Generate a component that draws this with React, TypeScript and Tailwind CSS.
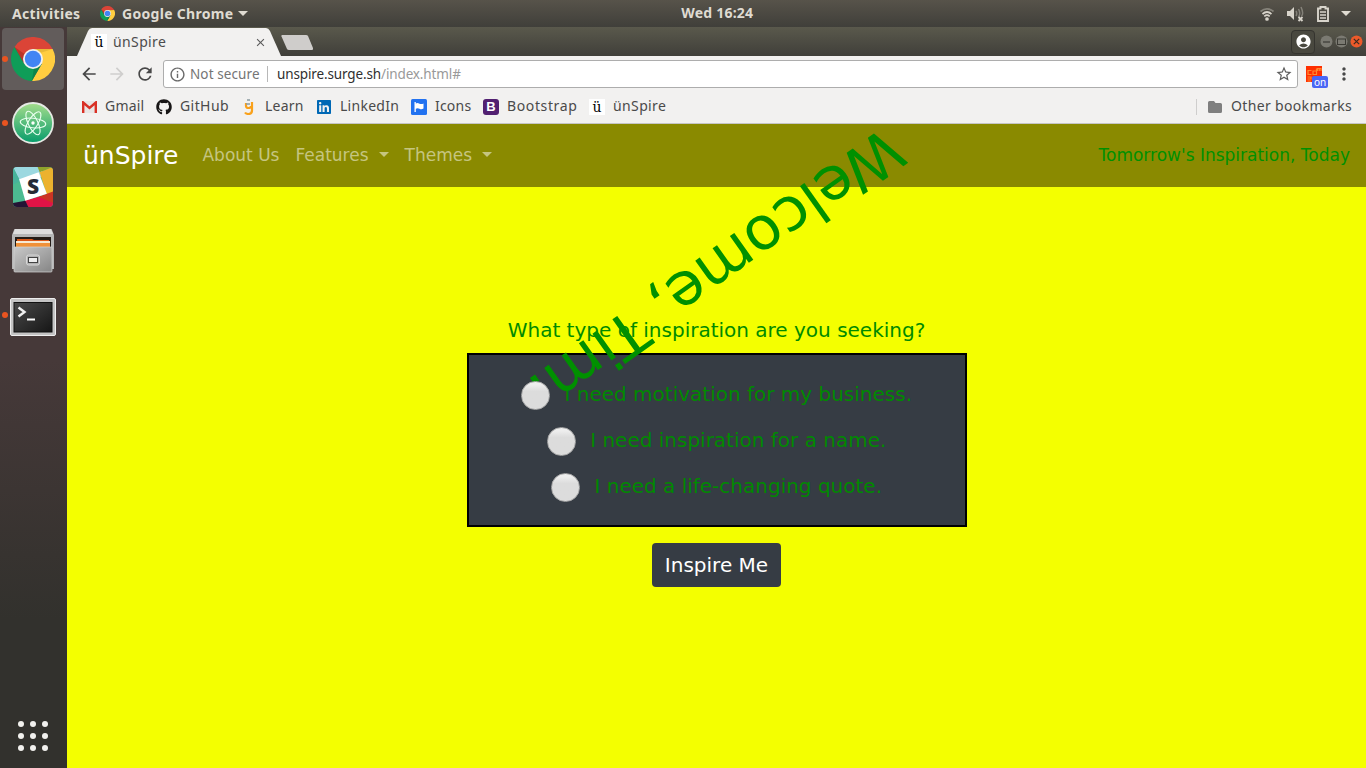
import React from "react";
import { FaGithub, FaLinkedin } from "react-icons/fa";
import { MdAccountCircle, MdArrowBack, MdArrowForward, MdRefresh, MdStarBorder, MdMoreVert, MdInfoOutline, MdClose } from "react-icons/md";

function ChromeLogo({ className }: { className: string }) {
  return (
    <svg viewBox="2 2 44 44" className={className}>
      <path d="M24 14H43.6A22 22 0 0 0 5.54 12.03L15.34 29Z" fill="#db4437" />
      <path d="M43.6 14A22 22 0 0 1 22.86 45.97L32.66 29L24 14Z" fill="#ffcd40" />
      <path d="M22.86 45.97A22 22 0 0 1 5.54 12.03L15.34 29H32.66Z" fill="#0f9d58" />
      <path d="M24 14H43.6L28 19Z" fill="#a97f1c" opacity=".25" />
      <path d="M5.54 12.03L15.34 29L17 20Z" fill="#7a1a10" opacity=".35" />
      <path d="M22.86 45.97L32.66 29L25 33Z" fill="#05502c" opacity=".3" />
      <circle cx="24" cy="24" r="10" fill="#f1f1f1" />
      <circle cx="24" cy="24" r="8.2" fill="#4285f4" />
    </svg>
  );
}

function AtomLogo() {
  return (
    <svg viewBox="0 0 42 42" className="size-[42px]">
      <defs>
        <linearGradient id="atom" x1="0" y1="0" x2="0" y2="1">
          <stop offset="0" stopColor="#a5dd8c" />
          <stop offset="1" stopColor="#069c6b" />
        </linearGradient>
      </defs>
      <circle cx="21" cy="21" r="20" fill="url(#atom)" stroke="#e6e9e4" strokeWidth="1.8" />
      <g fill="none" stroke="#eafff0" strokeWidth="1.1">
        <ellipse cx="21" cy="21" rx="12.8" ry="4.8" transform="rotate(6 21 21)" />
        <ellipse cx="21" cy="21" rx="12.8" ry="4.8" transform="rotate(64 21 21)" />
        <ellipse cx="21" cy="21" rx="12.8" ry="4.8" transform="rotate(122 21 21)" />
      </g>
      <circle cx="21" cy="21" r="1.7" fill="#fff" />
    </svg>
  );
}

function SlackLogo() {
  return (
    <div className="relative flex size-[40px] items-center justify-center overflow-hidden rounded-sm">
      <svg viewBox="0 0 39 39" className="absolute size-[40px]">
        <rect width="39" height="39" fill="#4cbb91" />
        <path d="M0 0H27L30 9L7 14Z" fill="#9bd8e0" />
        <path d="M0 0L7 14L0 17Z" fill="#47b39b" />
        <path d="M24 0H39L26 5Z" fill="#8fa32c" />
        <path d="M26 5L39 0V26L33 27Z" fill="#ecb22e" />
        <path d="M11 33L39 25V39H15Z" fill="#e01346" />
        <path d="M25 29L39 24V35Z" fill="#cb3524" />
        <path d="M0 35L12 33L15 39H0Z" fill="#241435" />
        <path d="M6 12L25 5L33 26L12 33Z" fill="#fff" />
      </svg>
      <span className="relative -top-px font-['Open_Sans',sans-serif] text-[21px] leading-none font-extrabold text-[#252a36]">S</span>
    </div>
  );
}

function FilesIcon() {
  return (
    <svg viewBox="0 0 42 44" className="h-[44px] w-[42px]">
      <defs>
        <linearGradient id="cab" x1="0" y1="0" x2="1" y2="1">
          <stop offset="0" stopColor="#c9c9c9" />
          <stop offset="1" stopColor="#858585" />
        </linearGradient>
      </defs>
      <path d="M2 1Q2 0 3 0H39Q40 0 40 1L42 6V40H0V6Z" fill="#b6b6b6" />
      <path d="M3 0H39L41 5H1Z" fill="#dddddd" />
      <rect x="3" y="8" width="36" height="11" fill="#241c17" />
      <path d="M5 10H20L22 11H37V20H5Z" fill="#d85618" />
      <path d="M4 12H38V14H4Z" fill="#f6e9d4" />
      <path d="M4 14H38V19H4Z" fill="#f09138" />
      <path d="M2 18H40V42Q40 43 39 43H3Q2 43 2 42Z" fill="url(#cab)" stroke="#d4d4d4" strokeWidth=".7" />
      <rect x="14.500" y="26" width="13" height="10" rx="2" fill="#b2b2b2" stroke="#d7d7d7" />
      <rect x="16.500" y="28.500" width="9" height="5" fill="#eee" stroke="#444" />
    </svg>
  );
}

function TerminalIcon() {
  return (
    <svg viewBox="0 0 46 38" className="mt-[4px] h-[38px] w-[46px]">
      <defs>
        <linearGradient id="term" x1="0" y1="0" x2="1" y2="1">
          <stop offset="0" stopColor="#4a4a4a" />
          <stop offset="1" stopColor="#161616" />
        </linearGradient>
      </defs>
      <rect x=".5" y=".5" width="45" height="37" rx="1.500" fill="#c4c4c4" stroke="#eeeeee" />
      <rect x="4" y="4.500" width="38" height="29.500" fill="url(#term)" stroke="#111" />
      <path d="M8.500 9.500L14.500 14L8.500 18.500" fill="none" stroke="#f1f1f1" strokeWidth="2.400" />
      <path d="M17 21.500H25" stroke="#fff" strokeWidth="2" />
    </svg>
  );
}

function DockItem({ children, running, active }: { children: React.ReactNode; running?: boolean; active?: boolean }) {
  return (
    <div className={active ? "relative flex h-[62px] w-[62px] items-center justify-center rounded-[4px] bg-[#625c5b]" : "relative flex h-[62px] w-[62px] items-center justify-center"}>
      {running && <span className="absolute top-[28px] left-0 size-[6px] rounded-full bg-[#e95420]" />}
      {children}
    </div>
  );
}

function Dock() {
  return (
    <aside className="flex w-[67px] shrink-0 flex-col items-center justify-between bg-linear-to-b from-[#463939] from-45% to-[#32312d] to-80% pt-px pr-px pb-[17px]">
      <div className="flex flex-col gap-[2px]">
        <DockItem running active><ChromeLogo className="size-[44px]" /></DockItem>
        <DockItem running><AtomLogo /></DockItem>
        <DockItem><SlackLogo /></DockItem>
        <DockItem><FilesIcon /></DockItem>
        <DockItem running><TerminalIcon /></DockItem>
      </div>
      <div className="grid grid-cols-3 gap-[6px]">
        {Array.from({ length: 9 }, (_, i) => (
          <span key={i} className="size-[6px] rounded-full bg-[#f2f1ee]" />
        ))}
      </div>
    </aside>
  );
}

function TopBar() {
  return (
    <header className="grid h-[27px] shrink-0 grid-cols-3 items-center bg-linear-to-b from-[#57534a] to-[#403f3a] font-['Noto_Sans',sans-serif] text-[14px] leading-none font-bold text-[#dfdbd2]">
      <div className="flex items-center pl-[12px]">
        <span className="w-[88px] tracking-[0.35px]">Activities</span>
        <ChromeLogo className="size-[15px]" />
        <span className="ml-[7px] w-[116px] whitespace-nowrap tracking-[0.3px]">Google Chrome</span>
        <svg viewBox="0 0 10 5" className="h-[5px] w-[10px]"><path d="M0 0H10L5 5Z" fill="#dfdbd2" /></svg>
      </div>
      <div className="pb-[2px] pl-[226px] tracking-[0.2px] whitespace-nowrap">Wed 16:24</div>
      <div className="flex items-center justify-end pr-[15px]">
        <svg viewBox="0 0 16 14" className="mr-[12px] h-[14px] w-[16px]" fill="none" stroke="#d8d4cb" strokeWidth="1.700">
          <path d="M1.500 4.500Q8 -.8 14.500 4.500" opacity=".4" />
          <path d="M3.500 7Q8 3 12.500 7" />
          <path d="M5.300 9.300Q8 7 10.700 9.300" />
          <circle cx="8" cy="12" r="1" fill="#d8d4cb" />
        </svg>
        <svg viewBox="0 0 17 16" className="mr-[13px] h-[16px] w-[17px]" fill="none" stroke="#d8d4cb">
          <path d="M0 5H3L7 1V14L3 10H0Z" fill="#d8d4cb" stroke="none" />
          <path d="M9 5Q10.500 7.500 9 10M11.500 3Q14 7.500 11.500 11M14 1Q17 7.500 14.500 10" opacity=".4" strokeWidth="1.500" />
          <path d="M11.500 11L15.500 15M15.500 11L11.500 15" strokeWidth="1.800" />
        </svg>
        <svg viewBox="0 0 12 16" className="mr-[12px] h-[16px] w-[12px]" fill="none" stroke="#d8d4cb">
          <path d="M1 2.500H3.500V1H8.500V2.500H11V15H1Z" strokeWidth="1.900" />
          <path d="M3 6H9M3 9H9M3 12H9" strokeWidth="1.700" />
        </svg>
        <svg viewBox="0 0 10 5" className="h-[5px] w-[10px]"><path d="M0 0H10L5 5Z" fill="#dfdbd2" /></svg>
      </div>
    </header>
  );
}

function Favicon() {
  return <span className="flex size-[16px] items-center justify-center bg-white font-['DejaVu_Serif',serif] text-[14px] leading-none font-normal text-black">ü</span>;
}

function TabStrip() {
  return (
    <div className="flex h-[29px] items-end bg-linear-to-b from-[#5a594c] to-[#403f3a] pl-[10px]">
      <div className="relative flex h-[28px] w-[204px] items-center">
        <svg viewBox="0 0 204 28" className="absolute h-[28px] w-[204px]"><path d="M0 28L11 3Q12.500 0 15 0H189Q191.500 0 193 3L204 28Z" fill="#f2f1f0" /></svg>
        <div className="relative flex w-full items-center pl-[14px]">
          <Favicon />
          <span className="ml-[6px] w-[141px] text-[14px] leading-none tracking-[0.38px] text-[#4c4c4c]">ünSpire</span>
          <MdClose className="size-[13px] text-[#5a5a5a]" />
        </div>
      </div>
      <svg viewBox="0 0 33 15" className="mb-[6px] h-[15px] w-[33px]"><path d="M1 0H25Q26.500 0 27 1L32 13Q32.500 15 31 15H8Q6.500 15 6 14L.5 1.500Q0 0 1 0Z" fill="#cfcdcb" /></svg>
      <div className="ml-auto flex h-[29px] items-center pr-[3px]">
        <div className="mr-[5px] flex h-[24px] w-[24px] items-center justify-center rounded-[4px] border border-[#35342f] bg-[#49483f]">
          <MdAccountCircle className="size-[17px] text-white" />
        </div>
        <svg viewBox="0 0 43 13" className="h-[13px] w-[43px]" fill="none">
          <circle cx="6.500" cy="6.500" r="6" fill="#7b7a72" /><path d="M3 7H10" stroke="#3b3a34" strokeWidth="1.200" />
          <circle cx="21.500" cy="6.500" r="6" fill="#7b7a72" /><rect x="17.500" y="4" width="8" height="5.500" stroke="#3b3a34" />
          <circle cx="36.500" cy="6.500" r="6" fill="#ec5a2a" /><path d="M33.800 3.800L39.200 9.200M39.200 3.800L33.800 9.200" stroke="#3b2a20" strokeWidth="1.200" />
        </svg>
      </div>
    </div>
  );
}

function AddressBar() {
  return (
    <div className="flex h-[36px] items-center pl-[12px]">
      <MdArrowBack className="size-[20px] text-[#484848]" />
      <MdArrowForward className="ml-[8px] size-[20px] text-[#cfcecd]" />
      <MdRefresh className="ml-[8px] size-[20px] text-[#484848]" />
      <div className="ml-[8px] flex h-[28px] w-[1135px] items-center rounded-[3px] border border-[#adadad] bg-white pl-[5px] text-[13.500px] leading-none">
        <MdInfoOutline className="size-[17px] text-[#6a6a6a]" />
        <span className="mt-px ml-[4px] w-[77px] tracking-[0.1px] whitespace-nowrap text-[#757575]">Not secure</span>
        <span className="mr-[9px] h-[16px] w-px bg-[#b8b8b8]" />
        <span className="mt-px tracking-[-0.13px] text-[#2f2f2f]">unspire.surge.sh</span><span className="mt-px tracking-[-0.13px] text-[#999]">/index.html#</span>
        <MdStarBorder className="mr-[4px] ml-auto size-[18px] text-[#5d5d5d]" />
      </div>
      <div className="relative ml-[8px] size-[16px] bg-[#ff2f00] leading-none">
        <svg viewBox="0 0 16 16" className="size-[16px]" fill="none" stroke="#ff8a30" strokeWidth="1.200">
          <path d="M5.500 4.500H2V8.500H5.500M10.500 2.500V8.500H7V5H10.500M11.500 5V2.500H15V5M13.300 2.500V5M1.500 11H5V13H1.500M1.500 15H5" />
        </svg>
        <span className="absolute top-[10px] left-[6px] flex h-[12px] w-[16px] items-center justify-center rounded-[2px] bg-[#4a66f5] text-[10px] leading-none text-white">on</span>
      </div>
      <MdMoreVert className="ml-[12px] size-[20px] text-[#484848]" />
    </div>
  );
}

function Bookmark({ icon, label, width, spacing = "tracking-[0.2px]" }: { icon: React.ReactNode; label: string; width: string; spacing?: string }) {
  return (
    <div className={"flex items-center gap-[8px] whitespace-nowrap " + width}>
      <span className="flex w-[16px] shrink-0 justify-center">{icon}</span>
      <span className={"pb-[2px] " + spacing}>{label}</span>
    </div>
  );
}

function BookmarksBar() {
  return (
    <div className="flex h-[32px] items-center border-b border-[#c6c5c4] pb-[2px] pl-[14px] text-[14px] leading-none text-[#4a4a4a]">
      <Bookmark width="w-[75px]" label="Gmail" icon={
        <svg viewBox="0 0 15 12" className="h-[12px] w-[15px]"><path d="M0 0H15V12H0Z" fill="#e8e6e5" /><path d="M1.200 12V1.500L7.500 7L13.800 1.500V12" fill="none" stroke="#d93025" strokeWidth="2.400" /></svg>} />
      <Bookmark width="w-[85px]" label="GitHub" spacing="tracking-[0.42px]" icon={<FaGithub className="size-[16px] text-[#171515]" />} />
      <Bookmark width="w-[75px]" label="Learn" icon={
        <svg viewBox="0 0 12 16" className="h-[16px] w-[12px]" fill="none"><path d="M9 3V11.500Q9 15 5.500 15Q3 15 2 13.500" stroke="#f9a11b" strokeWidth="2.200" /><path d="M3 4V7Q3 9 5.500 9Q8 9 8 7" stroke="#f9a11b" strokeWidth="2.200" /><path d="M4 1H7M3 5H7" stroke="#8a9aa0" strokeWidth="1.500" /></svg>} />
      <Bookmark width="w-[95px]" label="LinkedIn" spacing="tracking-[0.28px]" icon={<FaLinkedin className="size-[16px] text-[#0068b5]" />} />
      <Bookmark width="w-[72px]" label="Icons" icon={
        <svg viewBox="0 0 16 16" className="size-[16px]"><rect width="16" height="16" rx="1.500" fill="#2272f0" /><path d="M3.500 3H4.800V4.500Q6.500 3.500 8.500 4.700Q10.500 5.600 12.500 4.500V9.500Q10.500 10.800 8.500 9.700Q6.500 8.800 4.800 9.800V13H3.500Z" fill="#fff" /></svg>} />
      <Bookmark width="w-[106px]" label="Bootstrap" spacing="tracking-[0.62px]" icon={<span className="flex size-[16px] items-center justify-center rounded-[3px] bg-[#522071] font-['Liberation_Sans',sans-serif] text-[13px] leading-none font-bold text-white">B</span>} />
      <Bookmark width="w-[90px]" label="ünSpire" spacing="tracking-[0.38px]" icon={<Favicon />} />
      <div className="ml-auto flex items-center pr-[14px]">
        <span className="mr-[11px] h-[16px] w-px bg-[#cfcecd]" />
        <svg viewBox="0 0 14 12" className="mr-[9px] h-[12px] w-[14px]"><path d="M1.500 0H6L7.500 2H12.500Q14 2 14 3.500V10.500Q14 12 12.500 12H1.500Q0 12 0 10.500V1.500Q0 0 1.500 0Z" fill="#7f7f7f" /></svg>
        <span className="pb-[2px] tracking-[0.34px] whitespace-nowrap">Other bookmarks</span>
      </div>
    </div>
  );
}

function Caret() {
  return <span className="ml-[10px] inline-block border-x-[5px] border-t-[5px] border-x-transparent border-t-[#c5c580] align-[4px]" />;
}

function SiteNav() {
  return (
    <nav className="flex h-[63px] items-center bg-[#8a8a00] px-[16px] text-[17px] text-[#c5c580]">
      <a className="mr-[24px] text-[25px] text-white">ünSpire</a>
      <a className="mr-[16px]">About Us</a>
      <a className="mr-[16px]">Features<Caret /></a>
      <a>Themes<Caret /></a>
      <span className="ml-auto text-[#009000]">Tomorrow's Inspiration, Today</span>
    </nav>
  );
}

function Option({ label }: { label: string }) {
  return (
    <label className="flex h-[46px] items-center justify-center pb-[2px]">
      <span className="relative z-20 mt-[3px] mr-[14.500px] size-[29px] rounded-full border border-[#a9a9a9] bg-linear-to-b from-[#eeeeee] from-10% to-[#dcdcdc] to-35%" />
      {label}
    </label>
  );
}

function Page() {
  return (
    <main className="flex flex-1 flex-col bg-[#f4ff00] font-['DejaVu_Sans',sans-serif] text-[20px] text-[#008a00]">
      <SiteNav />
      <div className="flex flex-col items-center">
        <h1 className="relative z-10 mt-[48px] h-[72px] rotate-[144.600deg] text-[60px] leading-[72px] whitespace-nowrap text-[#009000]">Welcome, Tim.</h1>
        <p className="mt-[8px] leading-[30px]">What type of inspiration are you seeking?</p>
        <div className="mt-[8px] h-[174px] w-[500px] border-2 border-black bg-[#363c44] pt-[17px]">
          <Option label="I need motivation for my business." />
          <Option label="I need inspiration for a name." />
          <Option label="I need a life-changing quote." />
        </div>
        <button className="mt-[16px] h-[44px] w-[129px] rounded-[4px] bg-[#363c44] text-[20px] text-white">Inspire Me</button>
      </div>
    </main>
  );
}

export default function App() {
  return (
    <div className="flex h-[768px] w-[1366px] flex-col overflow-hidden">
      <TopBar />
      <div className="flex min-h-0 flex-1">
        <Dock />
        <div className="flex min-w-0 flex-1 flex-col bg-[#f2f1f0] font-['Noto_Sans',sans-serif]">
          <TabStrip />
          <AddressBar />
          <BookmarksBar />
          <Page />
        </div>
      </div>
    </div>
  );
}
